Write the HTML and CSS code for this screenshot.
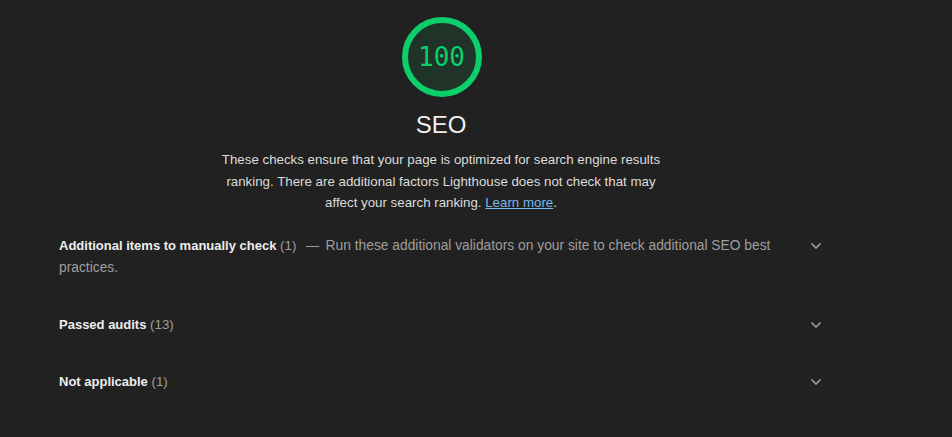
FILE: index.html
```html
<!DOCTYPE html>
<html lang="en">
<head>
<meta charset="utf-8">
<title>SEO</title>
<link rel="stylesheet" href="styles.css">
</head>
<body>
<div class="category">
  <div class="header">
    <div class="gauge">
      <svg class="gauge-svg" width="82" height="82" viewBox="0 0 82 82">
        <circle cx="41" cy="41" r="37" class="gauge-base"></circle>
        <circle cx="41" cy="41" r="37" class="gauge-arc"></circle>
      </svg>
      <div class="gauge-value">100</div>
    </div>
    <div class="title">SEO</div>
    <p class="description">These checks ensure that your page is optimized for search engine results ranking. There are additional factors Lighthouse does not check that may affect your search ranking. <a href="#" class="link">Learn more</a>.</p>
  </div>
  <div class="groups">
    <div class="group">
      <div class="group-text"><span class="group-title">Additional items to manually check</span> <span class="count">(1)</span> <span class="dash">—</span> <span class="group-desc">Run these additional validators on your site to check additional SEO best practices.</span></div>
      <svg class="chevron" width="12" height="8" viewBox="0 0 12 8"><path d="M1.5 1.5 L6 6 L10.5 1.5" fill="none" stroke="#9e9e9e" stroke-width="1.6"/></svg>
    </div>
    <div class="group">
      <div class="group-text"><span class="group-title">Passed audits</span> <span class="count">(13)</span></div>
      <svg class="chevron" width="12" height="8" viewBox="0 0 12 8"><path d="M1.5 1.5 L6 6 L10.5 1.5" fill="none" stroke="#9e9e9e" stroke-width="1.6"/></svg>
    </div>
    <div class="group">
      <div class="group-text"><span class="group-title">Not applicable</span> <span class="count">(1)</span></div>
      <svg class="chevron" width="12" height="8" viewBox="0 0 12 8"><path d="M1.5 1.5 L6 6 L10.5 1.5" fill="none" stroke="#9e9e9e" stroke-width="1.6"/></svg>
    </div>
  </div>
</div>
</body>
</html>
```
FILE: styles.css
```css
html, body {
  margin: 0;
  padding: 0;
  background: #212121;
  font-family: "Liberation Sans", Arial, sans-serif;
  color: #e0e0e0;
}
.category {
  width: 764px;
  margin-left: 59px;
  padding-top: 16px;
}
.header {
  display: flex;
  flex-direction: column;
  align-items: center;
}
.gauge {
  position: relative;
  width: 82px;
  height: 82px;
  margin-left: 1px;
}
.gauge-svg {
  display: block;
}
.gauge-base {
  fill: #1f3328;
  stroke: none;
}
.gauge-arc {
  fill: none;
  stroke: #0ccf6b;
  stroke-width: 6;
}
.gauge-value {
  position: absolute;
  inset: 0;
  display: flex;
  align-items: center;
  justify-content: center;
  font-family: "DejaVu Sans Mono", "Liberation Mono", monospace;
  font-size: 26px;
  color: #0ccf6b;
}
.title {
  margin-top: 12px;
  font-size: 24px;
  line-height: 30px;
  color: #f0f0f0;
}
.description {
  margin: 9px 0 0 0;
  width: 450px;
  text-align: center;
  font-size: 13.3px;
  line-height: 21.5px;
  color: #dcdcdc;
}
.link {
  color: #79b8ec;
  text-decoration: underline;
}
.groups {
  margin-top: 4px;
}
.group {
  display: flex;
  justify-content: space-between;
  align-items: flex-start;
  padding: 17px 0 18px 0;
}
.group-text {
  width: 725px;
  font-size: 13px;
  line-height: 22px;
  color: #9e9e9e;
}
.group-title {
  font-weight: bold;
  color: #eeeeee;
}
.count {
  color: #9e9e9e;
  font-size: 13.3px;
}
.dash {
  margin: 0 3px 0 6px;
}
.group-desc {
  font-size: 13.8px;
}
.chevron {
  margin-top: 7px;
  margin-right: 1px;
}
```
